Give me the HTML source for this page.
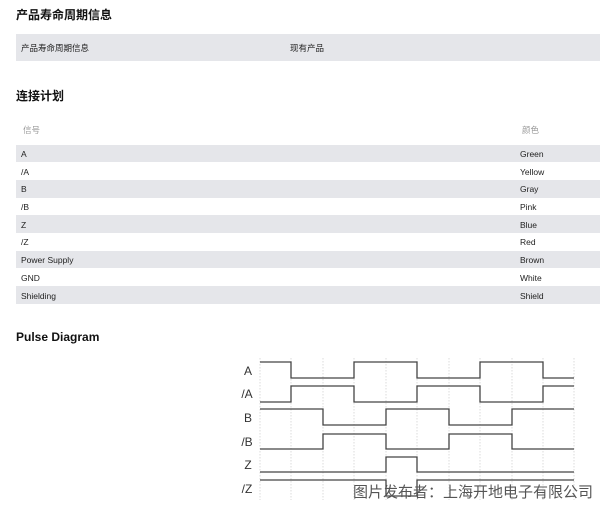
<!DOCTYPE html>
<html><head><meta charset="utf-8"><style>
*{margin:0;padding:0;box-sizing:border-box}
body{width:600px;height:509px;background:#fff;position:relative;overflow:hidden;font-family:"Liberation Sans","Noto Sans CJK SC",sans-serif;color:#222}
.a{position:absolute;white-space:nowrap}
.h{font-size:12px;font-weight:bold;color:#111}
.s{font-size:8.5px;line-height:1}
.r{position:absolute;left:16px;width:584px;height:17.7px}
.g{background:#e5e6ea}
</style></head><body>
<div class="a h" style="left:16px;top:6px">产品寿命周期信息</div>
<div class="r g" style="top:34px;height:27px"></div>
<div class="a s" style="left:21px;top:44px">产品寿命周期信息</div>
<div class="a s" style="left:290px;top:44px">现有产品</div>
<div class="a h" style="left:16px;top:87px">连接计划</div>
<div class="a s" style="left:23px;top:126px;color:#999">信号</div>
<div class="a s" style="left:522px;top:126px;color:#999">颜色</div>
<div class="r g" style="top:144.5px"></div>
<div class="r g" style="top:180px"></div>
<div class="r g" style="top:215.4px"></div>
<div class="r g" style="top:250.8px"></div>
<div class="r g" style="top:286.2px"></div>
<div class="a s" style="left:21px;top:150px">A</div><div class="a s" style="left:520px;top:150px">Green</div>
<div class="a s" style="left:21px;top:168px">/A</div><div class="a s" style="left:520px;top:168px">Yellow</div>
<div class="a s" style="left:21px;top:185px">B</div><div class="a s" style="left:520px;top:185px">Gray</div>
<div class="a s" style="left:21px;top:203px">/B</div><div class="a s" style="left:520px;top:203px">Pink</div>
<div class="a s" style="left:21px;top:221px">Z</div><div class="a s" style="left:520px;top:221px">Blue</div>
<div class="a s" style="left:21px;top:238px">/Z</div><div class="a s" style="left:520px;top:238px">Red</div>
<div class="a s" style="left:21px;top:256px">Power Supply</div><div class="a s" style="left:520px;top:256px">Brown</div>
<div class="a s" style="left:21px;top:274px">GND</div><div class="a s" style="left:520px;top:274px">White</div>
<div class="a s" style="left:21px;top:292px">Shielding</div><div class="a s" style="left:520px;top:292px">Shield</div>
<div class="a h" style="left:16px;top:330px">Pulse Diagram</div>
<svg class="a" style="left:0;top:0" width="600" height="509">
<g stroke="#ccc" stroke-width="0.7" stroke-dasharray="1.5,1.5">
<line x1="260" y1="358" x2="260" y2="500"/><line x1="291" y1="358" x2="291" y2="500"/><line x1="323" y1="358" x2="323" y2="500"/><line x1="354" y1="358" x2="354" y2="500"/><line x1="386" y1="358" x2="386" y2="500"/><line x1="417" y1="358" x2="417" y2="500"/><line x1="449" y1="358" x2="449" y2="500"/><line x1="480" y1="358" x2="480" y2="500"/><line x1="512" y1="358" x2="512" y2="500"/><line x1="543" y1="358" x2="543" y2="500"/><line x1="574" y1="358" x2="574" y2="500"/>
</g>
<g fill="none" stroke="#444" stroke-width="1.3">
<path d="M260 362H291V378H354V362H417V378H480V362H543V378H574"/>
<path d="M260 402H291V386H354V402H417V386H480V402H543V386H574"/>
<path d="M260 409H323V425H386V409H449V425H512V409H574"/>
<path d="M260 449H323V434H386V449H449V434H512V449H574"/>
<path d="M260 472H386V457H417V472H574"/>
<path d="M260 480H386V496H417V480H574"/>
</g>
<g font-family="Liberation Sans,sans-serif" font-size="12" fill="#333" text-anchor="middle">
<text x="248" y="375">A</text><text x="247" y="398">/A</text><text x="248" y="422">B</text><text x="247" y="446">/B</text><text x="248" y="469">Z</text><text x="247" y="493">/Z</text>
</g>
</svg>
<div class="a" style="left:353px;top:484px;font-size:15px;color:#555;font-family:'Noto Sans CJK SC',sans-serif;line-height:1.1">图片发布者：上海开地电子有限公司</div>
</body></html>
